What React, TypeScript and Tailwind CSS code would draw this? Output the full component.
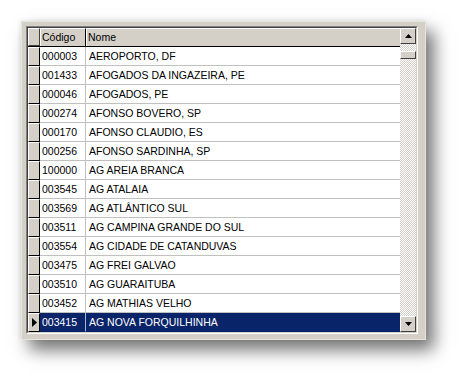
import React from 'react';

const rows: [string, string][] = [
  ['000003', 'AEROPORTO, DF'],
  ['001433', 'AFOGADOS DA INGAZEIRA, PE'],
  ['000046', 'AFOGADOS, PE'],
  ['000274', 'AFONSO BOVERO, SP'],
  ['000170', 'AFONSO CLAUDIO, ES'],
  ['000256', 'AFONSO SARDINHA, SP'],
  ['100000', 'AG AREIA BRANCA'],
  ['003545', 'AG ATALAIA'],
  ['003569', 'AG ATLÂNTICO SUL'],
  ['003511', 'AG CAMPINA GRANDE DO SUL'],
  ['003554', 'AG CIDADE DE CATANDUVAS'],
  ['003475', 'AG FREI GALVAO'],
  ['003510', 'AG GUARAITUBA'],
  ['003452', 'AG MATHIAS VELHO'],
  ['003415', 'AG NOVA FORQUILHINHA'],
];

const raised =
  'border border-t-white border-l-white border-r-[#404040] border-b-[#404040] bg-[#d4d0c8]';

const ScrollButton = ({ down }: { down?: boolean }) => (
  <div className={`h-[16px] w-[16px] flex items-center justify-center ${raised}`}>
    <svg width="7" height="4" viewBox="0 0 7 4">
      {down ? <polygon points="0,0 7,0 3.5,4" fill="#000" /> : <polygon points="0,4 7,4 3.5,0" fill="#000" />}
    </svg>
  </div>
);

export default function App() {
  return (
    <div
      className="w-[468px] h-[382px] bg-white pt-[21px] pl-[21px] text-[10.5px] text-black"
      style={{ fontFamily: '"Liberation Sans", Arial, sans-serif' }}
    >
      <div className="w-[405px] h-[319px] bg-[#d4d0c8] border border-[#e6e4df] shadow-[8px_10px_16px_rgba(0,0,0,0.55),-1px_-1px_4px_rgba(0,0,0,0.08)] p-[4px]">
        <div className="w-[392px] h-[308px] border border-t-[#808080] border-l-[#808080] border-r-white border-b-white">
          <div className="w-full h-full border border-t-[#404040] border-l-[#404040] border-r-[#d4d0c8] border-b-[#d4d0c8] flex bg-white">
            <div className="flex-1 flex flex-col">
              <div className="flex h-[19px] bg-[#d4d0c8] border-b border-black">
                <div className={`w-[12px] h-full border-r border-black ${raised}`} />
                <div className="w-[46px] h-full border-r border-black border-t border-t-white border-l border-l-white flex items-center pl-[1px] leading-none">
                  Código
                </div>
                <div className="flex-1 h-full border-t border-t-white border-l border-l-white flex items-center pl-[1px] leading-none">
                  Nome
                </div>
              </div>
              {rows.map(([code, name], i) => {
                const sel = i === rows.length - 1;
                return (
                  <div key={code} className="flex h-[19px]">
                    <div className="w-[12px] h-full bg-[#d4d0c8] border-t border-t-white border-l border-l-white border-r border-r-black border-b border-b-black flex items-center justify-center">
                      {sel && (
                        <svg width="5" height="9" viewBox="0 0 5 9">
                          <polygon points="0,0 5,4.5 0,9" fill="#000" />
                        </svg>
                      )}
                    </div>
                    <div
                      className={`w-[46px] h-full border-r border-b flex items-center pl-[2px] leading-none ${
                        sel ? 'bg-[#0a246a] text-white border-r-[#a6b4d4] border-b-[#0a246a]' : 'border-[#c0c0c0]'
                      }`}
                    >
                      {code}
                    </div>
                    <div
                      className={`flex-1 h-full border-b flex items-center pl-[3px] leading-none ${
                        sel ? 'bg-[#0a246a] text-white border-b-[#0a246a]' : 'border-[#c0c0c0]'
                      }`}
                    >
                      {name}
                    </div>
                  </div>
                );
              })}
            </div>
            <div className="w-[16px] flex flex-col bg-[repeating-conic-gradient(#d4d0c8_0_25%,#ffffff_0_50%)] bg-[length:2px_2px]">
              <ScrollButton />
              <div className={`h-[8px] w-[16px] mt-[7px] ${raised}`} />
              <div className="flex-1" />
              <ScrollButton down />
            </div>
          </div>
        </div>
      </div>
    </div>
  );
}
